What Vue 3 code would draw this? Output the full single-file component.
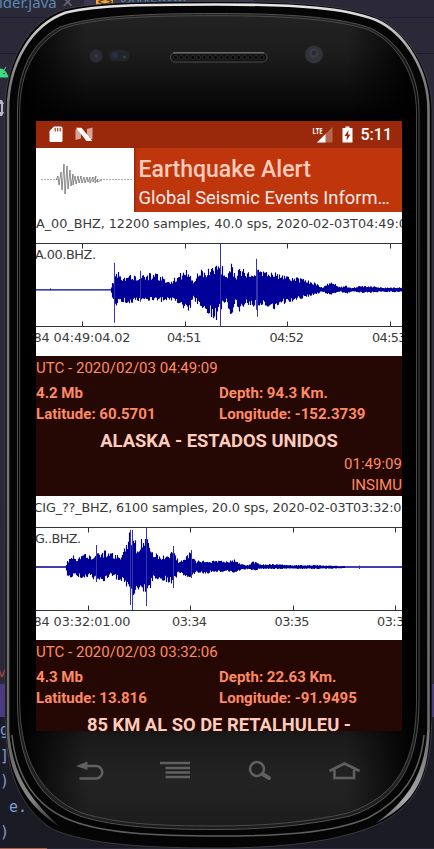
<script setup>
const quakes = [
  {
    utc: 'UTC - 2020/02/03 04:49:09', mag: '4.2 Mb', depth: 'Depth: 94.3 Km.',
    lat: 'Latitude: 60.5701', lon: 'Longitude: -152.3739',
    place: 'ALASKA - ESTADOS UNIDOS', local: '01:49:09', source: 'INSIMU',
    chart: {
      title: 'A_00_BHZ, 12200 samples, 40.0 sps, 2020-02-03T04:49:0', titleX: 0, titleW: 371, titleY: 16,
      station: 'A.00.BHZ.', stationX: -1, stationW: 61, stationY: 46.5,
      base: 77.8, ticks: [46.5, 149.5, 251.5, 354.5],
      labels: [['84 04:49:04.02', -2.5, 97], ['04:51', 131, 34.5], ['04:52', 233.5, 34.5], ['04:53', 336, 34.5]],
      env: [[36, .6, .6], [110, .6, .6], [112, 7, 8], [116, 19, 16], [123, 14, 12], [130, 15, 14], [140, 15, 11], [150, 16, 11], [160, 15, 12], [169, 8, 11], [177, 14, 15], [185, 20, 19], [189, 19, 24], [193, 8, 8], [197, 19, 15], [204, 20, 20], [210, 22, 26], [216, 25, 30], [222, 24, 17], [226, 14, 13], [231, 25, 29], [235, 13, 12], [238, 25, 27], [245, 18, 15], [256, 20, 17], [265, 17, 15], [275, 18, 19], [285, 14, 13], [295, 13, 11], [305, 10, 8], [315, 7, 5], [322, 2, 2], [330, 8, 6], [340, 3, 2], [346, 4, 4], [352, 2, 2], [360, 4, 3], [370, 4, 3], [380, 2.5, 2], [402, 2.5, 2.5]],
      spikes: [[114, 27, 33], [140, 19, 12], [220, 46, 37], [256, 31, 20], [257, 20, 27], [50, 1.5, .6]]
    }
  },
  {
    utc: 'UTC - 2020/02/03 03:32:06', mag: '4.3 Mb', depth: 'Depth: 22.63 Km.',
    lat: 'Latitude: 13.816', lon: 'Longitude: -91.9495',
    place: '85 KM AL SO DE RETALHULEU -', local: '', source: '',
    chart: {
      title: 'CIG_??_BHZ, 6100 samples, 20.0 sps, 2020-02-03T03:32:01', titleX: -2.5, titleW: 376, titleY: 16,
      station: 'G..BHZ.', stationX: -1, stationW: 46, stationY: 46.5,
      base: 71, ticks: [52.5, 154.5, 257.5, 359.5],
      labels: [['84 03:32:01.00', -2.5, 97], ['03:34', 136, 35], ['03:35', 238.5, 35], ['03:36', 341, 35]],
      env: [[36, .8, .8], [65, .8, .8], [67, 6, 9], [72, 12, 11], [76, 9, 9], [82, 14, 11], [90, 12, 10], [96, 14, 15], [105, 16, 14], [110, 13, 9], [115, 14, 11], [119, 10, 15], [123, 17, 15], [127, 29, 24], [130, 36, 34], [134, 29, 32], [138, 16, 22], [141, 28, 26], [146, 34, 28], [149, 27, 23], [153, 14, 12], [160, 12, 13], [167, 11, 15], [173, 18, 17], [178, 6, 6], [184, 8, 9], [190, 15, 12], [196, 6, 6], [206, 7, 7], [213, 6, 5], [217, 6, 5], [228, 6, 4], [234, 8, 7], [240, 3, 3], [248, 2, 2], [253, 6, 4], [260, 2.5, 2], [272, 3, 2], [290, 2, 2], [315, 2, 2], [338, 1.2, 1.5], [345, .8, .8], [402, .8, .8]],
      spikes: [[96, 22, 15], [130, 37, 38], [132, 37, 43], [146, 40, 39], [173, 21, 21], [191, 17, 11], [359, 1.5, 2]]
    }
  }
]

// Column-by-column trace built from the amplitude envelope.
function trace(chart) {
  let seed = 17
  const rnd = () => ((seed = (seed * 16807) % 2147483647) / 2147483647)
  let d = ''
  let k = 0
  for (let x = 36; x < 402; x++) {
    while (k < chart.env.length - 2 && chart.env[k + 1][0] <= x) k++
    const a = chart.env[k]
    const b = chart.env[k + 1]
    const t = (x - a[0]) / (b[0] - a[0])
    let up = a[1] + (b[1] - a[1]) * t
    let dn = a[2] + (b[2] - a[2]) * t
    if (up > 1) up *= 0.6 + 0.45 * rnd()
    if (dn > 1) dn *= 0.6 + 0.45 * rnd()
    d += `M${x - 35.5} ${(chart.base - up).toFixed(1)}V${(chart.base + dn).toFixed(1)}`
  }
  return d
}
const spikePath = c => c.spikes.map(s => `M${s[0] - 35.5} ${c.base - s[1]}V${c.base + s[2]}`).join('')
const tickPath = c => c.ticks.map(x => `M${x} 31V36.500M${x} 109.500V115`).join('')
const holes = Array.from({ length: 16 }, (_, i) => 175.5 + i * 5.75)
</script>

<template>
  <div class="desktop">
    <div class="ide">
      <div class="tabs"><span class="tab-a">lder.java</span><span class="close">×</span>
        <div class="tab-b"><i class="file">&lt;&gt;</i><span>YAMForm</span></div>
      </div>
      <div class="row"></div>
      <div class="row"></div>
      <div class="tool">
        <svg width="9" height="12" viewBox="0 0 9 12"><path d="M0 3Q5 2.500 8 11H0Z M4 4L6 1" fill="#3ddc84" stroke="#3ddc84" /><circle cx="4" cy="7.500" r=".7" fill="#2b2937" /></svg>
      </div>
      <div class="arrow"><svg width="5" height="16" viewBox="0 0 5 16"><path d="M0 0H2L4 4H3V12H4L2 16H0V12H1V4H0Z" fill="#b9b9bd" /></svg></div>
      <div class="gap"></div>
      <div class="vtext">v</div>
      <div class="band"></div>
      <pre class="code"><span>g</span><span>]</span><span>)</span><span> e.</span><span>)</span></pre>
      <div class="marker"></div>
    </div>

    <svg class="phone" width="434" height="849" viewBox="0 0 434 849">
      <defs>
        <linearGradient id="metal" x1="0" y1="0" x2="0" y2="849" gradientUnits="userSpaceOnUse">
          <stop offset="0" stop-color="#ececec" /><stop offset=".035" stop-color="#c4c4c4" /><stop offset=".1" stop-color="#777" />
          <stop offset=".5" stop-color="#777" /><stop offset="1" stop-color="#666" />
        </linearGradient>
        <linearGradient id="face" x1="0" y1="0" x2="0" y2="849" gradientUnits="userSpaceOnUse">
          <stop offset=".015" stop-color="#232323" /><stop offset=".06" stop-color="#1d1d1d" /><stop offset=".14" stop-color="#020202" />
          <stop offset=".82" stop-color="#000" /><stop offset=".87" stop-color="#1b1b1b" /><stop offset=".92" stop-color="#232323" /><stop offset=".98" stop-color="#1c1c1c" />
        </linearGradient>
        <linearGradient id="edge" x1="0" x2="434" y1="0" y2="0" gradientUnits="userSpaceOnUse">
          <stop offset=".04" stop-color="#000" /><stop offset=".2" stop-color="#000" stop-opacity="0" />
          <stop offset=".8" stop-color="#000" stop-opacity="0" /><stop offset=".96" stop-color="#000" />
        </linearGradient>
        <linearGradient id="glintR" x1="427" y1="745" x2="372" y2="823" gradientUnits="userSpaceOnUse">
          <stop offset="0" stop-color="#777" /><stop offset=".6" stop-color="#aaa" /><stop offset="1" stop-color="#555" />
        </linearGradient>
        <linearGradient id="glintL" x1="9" y1="745" x2="60" y2="826" gradientUnits="userSpaceOnUse">
          <stop offset="0" stop-color="#666" /><stop offset=".6" stop-color="#888" /><stop offset="1" stop-color="#222" />
        </linearGradient>
      </defs>
      <path fill="#050505" stroke="#4a4a50" stroke-width=".7" d="M217 1.500C300 1.500 350 6 378 18C408 33 432 70 432 110V710C432 768 422 800 383 822C340 843 275 848 217 848C160 848 90 846 52 829C14 804 5 760 5 710V110C5 60 30 20 65 9C100 1.500 150 1.500 217 1.500Z" />
      <path fill="none" stroke="url(#metal)" stroke-width="2.600" d="M8 730V110C8 65 30 25 66 12.500C100 4.500 150 4.500 217 4.500C300 4.500 345 8 376 20C405 33 428.500 70 428.500 110V730" />
      <path fill="none" stroke="#5f5f5f" stroke-width="1.500" d="M12 735C16 775 33 803 65 818C100 834 160 836 217 836C275 836 330 834 368 818C402 800 420 775 424 735" />
      <path fill="url(#glintL)" d="M6.700 730C8 770 22 803 60 827C36 804 12 780 9.300 730Z" />
      <path fill="url(#glintR)" d="M429.800 730C428 775 417 803 376 823C407 801 425 775 427.200 730Z" />
      <path fill="url(#face)" stroke="#515151" d="M217 13.500C285 13.500 340 17 370 28C400 42 419 72 419 112V700C419 762 400 800 350 816C310 825 265 829.500 217 829.500C160 829.500 115 827 80 816C36 800 17.500 760 17.500 700V112C17.500 70 32 42 60 27C92 15.500 150 13.500 217 13.500Z" />
      <path fill="url(#edge)" stroke="#4a4a4a" d="M217 15.700C285 15.700 339 19.500 369 30C397 43 416.500 74 416.500 112V700C416.500 760 398 796 348 813C310 822 265 826 217 826C160 826 117 824 82 813C40 796 19.700 758 19.700 700V112C19.700 72 35 44 62 29C92 17.500 150 15.700 217 15.700Z" />
      <circle cx="96" cy="56" r="6.500" fill="#2d2c31" /><circle cx="96.500" cy="56" r="2" fill="#35354a" />
      <rect x="109" y="50" width="20.500" height="11" rx="5.500" fill="#22252b" /><circle cx="115" cy="55" r="3" fill="#2b2e44" /><circle cx="124.500" cy="57" r="1.500" fill="#3d4048" />
      <rect x="170.500" y="52.500" width="96.500" height="9.500" rx="4.500" fill="#151515" stroke="#4c4c4c" /><path d="M173 53H264" stroke="#808080" />
      <circle v-for="x in holes" :key="x" :cx="x" cy="57.500" r="2" fill="#000" stroke="#353535" stroke-width=".8" />
      <circle cx="314" cy="54.500" r="9" fill="#30343a" /><circle cx="314" cy="53" r="4.500" fill="#3a3e46" /><circle cx="314" cy="53" r="2.300" fill="#282b33" />
      <g fill="none" stroke="#606060" stroke-width="2.600">
        <path d="M85 766H96A6.200 6.200 0 0 1 96 778.500H79.500" /><path d="M76 766L87.500 761.500V770Z" fill="#606060" stroke="none" />
        <path d="M160 763H190M165.500 768H190M165.500 772.500H190M165.500 777H190" stroke-width="2.400" />
        <circle cx="257" cy="769" r="7" /><path d="M262.500 774L269 778" stroke-width="4" stroke-linecap="round" />
        <path d="M329.500 771L344.500 763.500L359.500 771M334.500 770V778H354V770" />
      </g>
    </svg>

    <main class="screen">
      <div class="status">
        <svg class="sd" width="14" height="17" viewBox="0 0 14 17"><path fill="#fff" d="M5 .500H12Q13.500 .500 13.500 2V14.500Q13.500 16 12 16H2Q.500 16 .500 14.500V5Z" /><path d="M6.200 2V5.500M8.700 2V5.500M11.200 2V5.500" stroke="#9a290c" stroke-width="1.100" /></svg>
        <svg class="nlogo" width="18" height="15" viewBox="0 0 18 15"><path fill="#d9a596" d="M.500 2.500L6 1V11.500L.500 13ZM12 2L17.500 .500V12L12 13.500Z" /><path fill="#fff" d="M1 .800H6.500L17.300 14H11.500Z" /></svg>
        <span class="spacer"></span>
        <svg width="21" height="17" viewBox="0 0 21 17"><path fill="#b66751" d="M20.500 1V16.500H5Z" /><path fill="#fff" d="M13.500 8V16.500H5Z" /><path fill="#9a290c" d="M0 0H11.500V9H0Z" /><text x=".5" y="8" class="lte" textLength="10" lengthAdjust="spacingAndGlyphs">LTE</text></svg>
        <svg class="battery" width="11" height="17" viewBox="0 0 11 17"><path fill="#fff" d="M3.500 .500H7.500V2H10.500V16.500H.500V2H3.500Z" /><path fill="#9a290c" d="M6.500 4L2.500 10H5L4.500 14.500L8.500 8.500H6Z" /></svg>
        <time>5:11</time>
      </div>
      <header class="appbar">
        <div class="logo">
          <svg width="98" height="64" viewBox="0 0 98 64"><path fill="none" stroke="#888" stroke-width=".7" stroke-dasharray="2 1" d="M5 31.500H22M64 31.500H96" /><path fill="none" stroke="#444" stroke-width=".6" stroke-linejoin="bevel" d="M20 32L22 28L23 37L25 24L26 42L28 16L29 46L31 18L32 41L34 22L35 38L37 26L37 37L39 28L40 36L42 28L43 35L45 28L46 35L48 29L49 35L51 29L52 34L54 29L54 35L57 29L57 34L60 28L59 35L62 31L61 34L66 32" /></svg>
        </div>
        <div class="heading"><h1>Earthquake Alert</h1><p>Global Seismic Events Inform…</p></div>
      </header>
      <section v-for="q in quakes" :key="q.utc" class="quake">
        <svg class="chart" width="366" height="144" viewBox="0 0 366 144">
          <text :x="q.chart.titleX" :y="q.chart.titleY" :textLength="q.chart.titleW">{{ q.chart.title }}</text>
          <path class="frame" d="M0 31.500H366M0 114.500H366" />
          <path class="frame" :d="tickPath(q.chart)" />
          <path class="wave" :d="trace(q.chart)" />
          <path class="spike" :d="spikePath(q.chart)" />
          <text :x="q.chart.stationX" :y="q.chart.stationY" :textLength="q.chart.stationW">{{ q.chart.station }}</text>
          <text v-for="l in q.chart.labels" :key="l[0]" :x="l[1]" y="129.500" :textLength="l[2]">{{ l[0] }}</text>
        </svg>
        <div class="utc">{{ q.utc }}</div>
        <div class="facts"><b>{{ q.mag }}</b><b>{{ q.depth }}</b><b>{{ q.lat }}</b><b>{{ q.lon }}</b></div>
        <h2>{{ q.place }}</h2>
        <div class="right">{{ q.local }}</div>
        <div class="right">{{ q.source }}</div>
      </section>
    </main>
  </div>
</template>

<style>
body { margin: 0; overflow: hidden; }
</style>

<style scoped>
.desktop { position: relative; width: 434px; height: 849px; overflow: hidden; background: #2b2937; font-family: Roboto, sans-serif; }
.ide { display: flex; flex-direction: column; height: 849px; }
.tabs { display: flex; height: 17px; flex: none; border-bottom: 1px solid #201e38; font: 15px/4px "Noto Sans", sans-serif; color: #5d87b5; overflow: hidden; }
.tab-a { width: 63px; flex: none; margin-left: -1px; }
.close { width: 22px; color: #666878; font-size: 20px; }
.tab-b { display: flex; flex: 1; gap: 6px; padding-left: 12px; background: linear-gradient(90deg, #3a3850 170px, #2b2937 170px); color: #5584b0; line-height: 2px; }
.file { width: 17px; height: 6px; background: #f0a73e; color: #59401b; font: bold 10px/4px "DejaVu Sans", sans-serif; letter-spacing: -1px; text-align: center; }
.row { height: 35px; flex: none; border-bottom: 1px solid #1d1b31; }
.row + .row { height: 12px; border: 0; }
.tool { height: 12px; flex: none; }
.tool svg, .arrow svg { display: block; }
.arrow { height: 16px; padding-top: 22px; flex: none; }
.gap { height: 552px; flex: none; }
.vtext { height: 16px; flex: none; font: 15px/6px "Noto Sans", sans-serif; color: #a04744; text-indent: -2px; }
.band { height: 33px; flex: none; background: #4a3a83; }
.code { margin: 0; flex: 1; display: flex; flex-direction: column; background: #1b1b26; color: #7f9bd3; font: 15px/26px "DejaVu Sans Mono", monospace; }
.code span { height: 25.500px; }
.marker { width: 47px; height: 1px; flex: none; background: #a6604d; }
.phone { position: absolute; left: 0; top: 0; }
.screen { position: absolute; left: 36px; top: 121px; width: 366px; height: 610px; overflow: hidden; background: #250803; }
.status { display: flex; align-items: center; height: 27px; padding: 0 10px 0 13px; background: #9a290c; color: #fff; }
.nlogo { margin-left: 12px; }
.spacer { flex: 1; }
.lte { font: bold 9.500px "Open Sans", sans-serif; fill: #fff; }
.battery { margin: 0 8px 0 9px; }
time { font-size: 16px; font-weight: 500; }
.appbar { display: flex; height: 64px; background: #bf360c; overflow: hidden; }
.logo { width: 98px; background: #fff; box-shadow: 1px 0 2px #8a2708; }
.logo svg { display: block; }
.heading { padding: 7px 0 0 4.500px; white-space: nowrap; }
h1 { margin: 0; font-size: 23px; line-height: 30px; font-weight: 500; color: #ffccbc; }
p { margin: 0; font-size: 18.350px; line-height: 26px; color: #fbe9e7; }
.quake { color: #ff8a65; font-size: 15.060px; line-height: 21px; }
.chart { display: block; background: #fff; }
.chart text { font: 12.800px "DejaVu Sans", sans-serif; fill: #3a3a3a; }
.frame { stroke: #333; fill: none; }
.wave { stroke: #000099; stroke-width: 1.150; }
.spike { stroke: #3535ac; }
.utc { line-height: 24px; padding-bottom: 3px; }
.facts { display: grid; grid-template-columns: 1fr 1fr; }
h2 { margin: 2px 0 0; font-size: 18.350px; line-height: 28px; height: 27px; text-align: center; color: #ffccbc; font-weight: 700; }
.utc, .right { font-weight: 400; }
.right { text-align: right; height: 21px; }
.quake { height: 284px; }
</style>
